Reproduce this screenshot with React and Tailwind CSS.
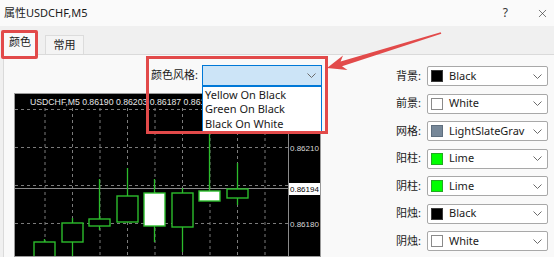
import React from 'react';
import { X } from 'lucide-react';

const UI_FONT = "font-['Noto_Sans','Noto_Sans_CJK_SC',sans-serif]";
const GREEN = '#2cbc2c';

const Chevron = () => (
  <svg width="9" height="5" viewBox="0 0 9 5" className="shrink-0">
    <polyline points="0.5,0.5 4.5,4.5 8.5,0.5" fill="none" stroke="#6b6b6b" strokeWidth="1" />
  </svg>
);

const colorRows = [
  { label: '背景:', name: 'Black', swatch: 'bg-black border-[#3a3a3a]' },
  { label: '前景:', name: 'White', swatch: 'bg-white border-[#8a8a8a]' },
  { label: '网格:', name: 'LightSlateGrav', swatch: 'bg-[#778899] border-[#5f6f7f]' },
  { label: '阳柱:', name: 'Lime', swatch: 'bg-[#00ff00] border-[#22aa22]' },
  { label: '阴柱:', name: 'Lime', swatch: 'bg-[#00ff00] border-[#22aa22]' },
  { label: '阳烛:', name: 'Black', swatch: 'bg-black border-[#3a3a3a]' },
  { label: '阴烛:', name: 'White', swatch: 'bg-white border-[#8a8a8a]' },
];

// candles in page coords: x center, body top/bottom, wick top/bottom, filled white?
const candles = [
  { x: 44.5, bt: 242, bb: 275, wt: 239, wb: 275, fill: false },
  { x: 72.5, bt: 223, bb: 242, wt: 218, wb: 275, fill: false },
  { x: 99.5, bt: 219, bb: 226, wt: 179, wb: 230, fill: false },
  { x: 127.5, bt: 196, bb: 222, wt: 168, wb: 222, fill: false },
  { x: 154.5, bt: 193, bb: 226, wt: 179, wb: 242, fill: true },
  { x: 182.5, bt: 193, bb: 227, wt: 188, wb: 252, fill: false },
  { x: 209.5, bt: 191, bb: 201, wt: 110, wb: 191, fill: true },
  { x: 237.5, bt: 189, bb: 198, wt: 163, wb: 205, fill: false },
];

const vGrid = [45, 72.5, 100, 127.5, 155, 182.5, 210, 237.5, 265];
const hGrid = [109.5, 147.5, 185.5, 223.5];

function Chart() {
  return (
    <div className="mt-[8px] w-[307px] h-[180px] border border-[#9a9a9a] bg-black overflow-hidden">
      <svg width="305" height="178" viewBox="15 94 305 178" className="block">
        {vGrid.map((x) => (
          <line key={x} x1={x} y1="108" x2={x} y2="272" stroke="#7b7b7b" strokeWidth="1" strokeDasharray="3 3" />
        ))}
        {hGrid.map((y) => (
          <line key={y} x1="15" y1={y} x2="288" y2={y} stroke="#7b7b7b" strokeWidth="1" strokeDasharray="3 3" />
        ))}
        <line x1="288.5" y1="94" x2="288.5" y2="272" stroke="#8a8a8a" strokeWidth="1" />
        <line x1="15" y1="188.5" x2="290" y2="188.5" stroke="#8a8a8a" strokeWidth="1" />

        {candles.map((c, i) => (
          <g key={i}>
            <line x1={c.x} y1={c.wt} x2={c.x} y2={c.wb} stroke={GREEN} strokeWidth="1.3" />
            <rect
              x={c.x - 10.5}
              y={c.bt}
              width="21"
              height={c.bb - c.bt}
              fill={c.fill ? '#ffffff' : '#000000'}
              stroke={GREEN}
              strokeWidth="1.4"
            />
          </g>
        ))}

        <text x="30" y="105" fill="#e6e6e6" fontSize="8.7" fontFamily="'Liberation Sans', sans-serif">
          USDCHF,M5  0.86190 0.86203 0.86187 0.86194
        </text>
        <text x="290" y="150.5" fill="#d8d8d8" fontSize="8" fontFamily="'Liberation Sans', sans-serif">0.86210</text>
        <rect x="289" y="183" width="31" height="12" fill="#ffffff" />
        <text x="290" y="192" fill="#000000" fontSize="8" fontFamily="'Liberation Sans', sans-serif">0.86194</text>
        <text x="290" y="226.5" fill="#d8d8d8" fontSize="8" fontFamily="'Liberation Sans', sans-serif">0.86180</text>
      </svg>
    </div>
  );
}

export default function App() {
  return (
    <div className={`relative w-[554px] h-[257px] overflow-hidden bg-[#f0f0f0] text-[#1a1a1a] text-[11px] ${UI_FONT}`}>
      {/* title bar */}
      <div className="h-[26px] bg-[#fafafa] flex items-center pl-[4px] pr-[5px]">
        <span className="text-[11px]">属性USDCHF,M5</span>
        <span className="ml-auto mr-[28px] text-[12px] text-[#333]">?</span>
        <X size={13} strokeWidth={1.2} className="text-[#333]" />
      </div>

      {/* tabs */}
      <div className="h-[28px] flex items-end pl-[3px]">
        <div className="relative z-10 -mb-px h-[25px] w-[34px] bg-[#f9f9f9] border border-b-0 border-[#dadada] flex items-center justify-center pb-[2px]">
          颜色
        </div>
        <div className="ml-[8px] h-[19px] w-[39px] bg-[#f4f4f4] border border-b-0 border-[#dcdcdc] flex items-center justify-center">
          常用
        </div>
      </div>

      {/* content */}
      <div className="ml-[3px] h-[203px] border-l border-t border-[#dadada] bg-[#f9f9f9] flex">
        <div className="w-[318px] pl-[10px] pt-[10px] flex flex-col">
          <div className="h-[20px] flex items-center justify-end gap-[4px]">
            <span>颜色风格:</span>
            <div className="relative w-[120px] h-[21px] bg-[#cce4f7] border border-[#0078d7] flex items-center justify-end pr-[5px]">
              <Chevron />
              <div className="absolute left-[-1px] top-[20px] w-[120px] h-[47px] bg-white border border-[#0078d7] pt-[1px] pl-[2px] leading-[14.5px] z-20">
                <div>Yellow On Black</div>
                <div>Green On Black</div>
                <div>Black On White</div>
              </div>
            </div>
          </div>
          <Chart />
        </div>

        <div className="ml-auto pr-[6px] pt-[11px] flex flex-col gap-[7.5px]">
          {colorRows.map((r) => (
            <div key={r.label} className="flex items-center gap-[6px]">
              <span className="w-[40px] text-right">{r.label}</span>
              <div className="w-[121px] h-[20px] bg-white border border-[#a8a8a8] rounded-[2px] flex items-center pl-[3px] pr-[5px]">
                <span className={`w-[12px] h-[12px] border ${r.swatch} shrink-0`} />
                <span className="ml-[6px] whitespace-nowrap">{r.name}</span>
                <span className="ml-auto">
                  <Chevron />
                </span>
              </div>
            </div>
          ))}
        </div>
      </div>

      {/* annotations */}
      <div className="absolute left-[1px] top-[30px] w-[37px] h-[29px] border-[3px] border-[#e24a4a] rounded-[2px] z-30" />
      <div className="absolute left-[146px] top-[56px] w-[182px] h-[78px] border-[3px] border-[#e24a4a] z-30" />
      <svg className="absolute left-0 top-0 z-30" width="554" height="257" viewBox="0 0 554 257">
        <polygon
          points="327,68 347.5,70 342,66.2 441.3,33.8 440.7,32.2 340.6,61.4 343,55.6"
          fill="#e24a4a"
        />
      </svg>
    </div>
  );
}
